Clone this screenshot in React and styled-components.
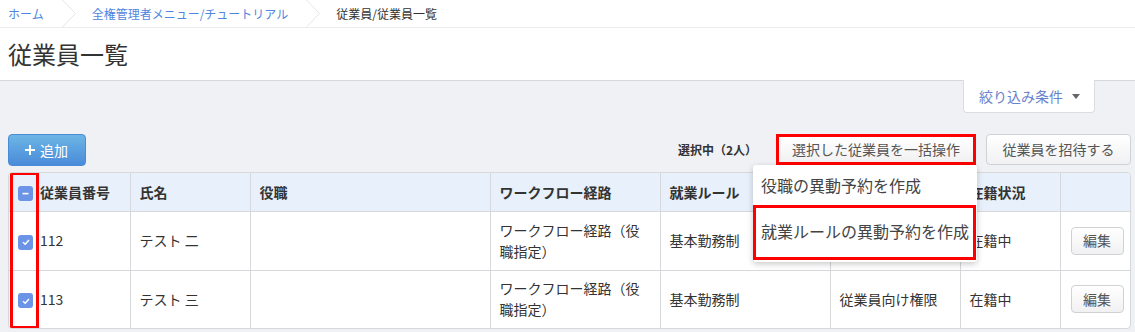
import React from "react";
import styled, { createGlobalStyle } from "styled-components";

const Global = createGlobalStyle`
  html, body { margin: 0; padding: 0; background: #f0f1f5; }
  body { font-family: "Noto Sans CJK JP", "Noto Sans", sans-serif; color: #333; }
  * { box-sizing: border-box; }
`;

const Page = styled.div`
  width: 1135px;
  height: 332px;
  overflow: hidden;
  background: #f0f1f5;
`;

const Breadcrumb = styled.nav`
  display: flex;
  align-items: center;
  height: 28px;
  padding-left: 8px;
  background: #fff;
  border-bottom: 1px solid #ececec;
  font-size: 12px;
`;

const Crumb = styled.span`
  color: ${(p) => (p.$current ? "#333" : "#4f86e0")};
  white-space: nowrap;
  line-height: 27px;
`;

const SepWrap = styled.span`
  display: flex;
  width: 14px;
  height: 27px;
  margin: 0 16px 0 18px;
`;

const Sep = () => (
  <SepWrap>
    <svg width="14" height="27" viewBox="0 0 14 27">
      <polyline points="0.5,0 13.5,13.5 0.5,27" fill="none" stroke="#e6e6e6" strokeWidth="1" />
    </svg>
  </SepWrap>
);

const TitleBar = styled.header`
  height: 53px;
  display: flex;
  align-items: center;
  padding: 0 0 2px 8px;
  background: #fff;
  border-bottom: 1px solid #d6d8dc;
`;

const Title = styled.h1`
  margin: 0;
  font-size: 24px;
  font-weight: 400;
  color: #333;
`;

const Content = styled.main`
  padding: 0 4px 0 8px;
`;

const FilterRow = styled.div`
  display: flex;
  justify-content: flex-end;
  padding-right: 36px;
`;

const FilterTab = styled.button`
  display: flex;
  align-items: center;
  gap: 9px;
  height: 33px;
  width: 132px;
  padding: 0 0 0 15px;
  margin-top: -1px;
  background: #fff;
  border: 1px solid #dcdde1;
  border-top: none;
  border-radius: 0 0 4px 4px;
  font: inherit;
  font-size: 14px;
  color: #6b82cc;
`;

const Caret = styled.span`
  width: 0;
  height: 0;
  border-left: 4px solid transparent;
  border-right: 4px solid transparent;
  border-top: 5px solid #666;
`;

const Toolbar = styled.div`
  display: flex;
  align-items: center;
  height: 32px;
  margin-top: 20px;
`;

const AddButton = styled.button`
  display: flex;
  align-items: center;
  gap: 4px;
  width: 78px;
  height: 32px;
  margin-top: 2px;
  padding: 0 0 0 15px;
  border: 1px solid #4a8ad6;
  border-radius: 4px;
  background: linear-gradient(#6cb6e6, #4a8bd9);
  color: #fff;
  font: inherit;
  font-size: 14px;
`;

const Spacer = styled.div`
  flex: 1;
`;

const SelectedLabel = styled.span`
  font-size: 12px;
  font-weight: 700;
  color: #333;
  margin-right: 19px;
`;

const BulkWrap = styled.div`
  position: relative;
  display: flex;
`;

const GrayButton = styled.button`
  height: 31px;
  padding: 0 14px;
  border: 1px solid #d0d2d6;
  border-radius: 4px;
  background: linear-gradient(#ffffff, #f1f1f3);
  color: #555;
  font: inherit;
  font-size: 14px;
  white-space: nowrap;
`;

const BulkButton = styled(GrayButton)`
  width: 200px;
  border: 3px solid #f00;
  border-radius: 0;
  padding: 0;
`;

const InviteButton = styled(GrayButton)`
  width: 145px;
  margin-left: 10px;
  padding: 0;
`;

const Menu = styled.ul`
  position: absolute;
  top: 31px;
  right: -1px;
  width: 224px;
  margin: 0;
  padding: 0 0 2px;
  list-style: none;
  background: #fff;
  border-radius: 3px;
  box-shadow: 0 2px 6px rgba(0, 0, 0, 0.22);
  z-index: 5;
`;

const MenuItem = styled.li`
  display: flex;
  align-items: center;
  height: ${(p) => (p.$hl ? 55 : 40)}px;
  padding: ${(p) => (p.$hl ? "0 0 2px 5px" : "0 0 0 8px")};
  font-size: 16px;
  color: #444;
  white-space: nowrap;
  border: ${(p) => (p.$hl ? "3px solid #f00" : "none")};
  margin-right: ${(p) => (p.$hl ? "1px" : "0")};
`;

const TableWrap = styled.div`
  position: relative;
  margin-top: 7px;
  background: #fff;
  border: 1px solid #d6d8dc;
  border-radius: 4px;
  overflow: hidden;
`;

const Table = styled.table`
  width: 100%;
  border-collapse: collapse;
  table-layout: fixed;
  font-size: 14px;
`;

const Th = styled.th`
  height: 38px;
  padding: 0 0 0 ${(p) => p.$pl ?? 9}px;
  text-align: left;
  font-weight: 700;
  background: #e8f0fb;
  color: #333;
  border-left: ${(p) => (p.$noLeft ? "none" : "1px solid #d6d8dc")};
  border-bottom: 1px solid #d6d8dc;
  white-space: nowrap;
`;

const Td = styled.td`
  height: ${(p) => (p.$last ? 58 : 59)}px;
  padding: 0 ${(p) => p.$pr ?? 6}px 0 ${(p) => p.$pl ?? 9}px;
  vertical-align: middle;
  color: #333;
  line-height: 21px;
  border-left: ${(p) => (p.$noLeft ? "none" : "1px solid #d6d8dc")};
  border-bottom: ${(p) => (p.$last ? "none" : "1px solid #d6d8dc")};
`;

const Box = styled.span`
  display: inline-flex;
  align-items: center;
  justify-content: center;
  width: 15px;
  height: 15px;
  border-radius: 3px;
  background: #6b93e6;
  vertical-align: middle;
`;

const Minus = () => (
  <Box>
    <svg width="9" height="9" viewBox="0 0 9 9">
      <rect x="1.5" y="3.8" width="6" height="1.6" fill="#fff" />
    </svg>
  </Box>
);

const Check = () => (
  <Box>
    <svg width="10" height="10" viewBox="0 0 10 10">
      <polyline points="2,5.2 4.2,7.2 8,3" fill="none" stroke="#fff" strokeWidth="1.5" />
    </svg>
  </Box>
);

const ColHighlight = styled.div`
  position: absolute;
  left: 1px;
  top: -1px;
  width: 29px;
  height: 157px;
  border: 3px solid #f00;
  pointer-events: none;
`;

const EditButton = styled(GrayButton)`
  width: 53px;
  height: 28px;
  padding: 0;
  margin-left: 1px;
`;

/* The 権限 header and first row's 権限 cell sit under the open menu in the reference. */
const rows = [
  { no: "112", name: "テスト 二", role: "", wf: "ワークフロー経路（役職指定）", rule: "基本勤務制", perm: "", status: "在籍中" },
  { no: "113", name: "テスト 三", role: "", wf: "ワークフロー経路（役職指定）", rule: "基本勤務制", perm: "従業員向け権限", status: "在籍中" },
];

const cols = [30, 91, 120, 240, 170, 170, 130, 100, 72];

export default function App() {
  return (
    <Page>
      <Global />
      <Breadcrumb>
        <Crumb>ホーム</Crumb>
        <Sep />
        <Crumb>全権管理者メニュー/チュートリアル</Crumb>
        <Sep />
        <Crumb $current>従業員/従業員一覧</Crumb>
      </Breadcrumb>
      <TitleBar>
        <Title>従業員一覧</Title>
      </TitleBar>
      <Content>
        <FilterRow>
          <FilterTab>
            絞り込み条件 <Caret />
          </FilterTab>
        </FilterRow>
        <Toolbar>
          <AddButton>
            <svg width="12" height="12" viewBox="0 0 12 12">
              <path d="M6 1v10M1 6h10" stroke="#fff" strokeWidth="2" />
            </svg>
            追加
          </AddButton>
          <Spacer />
          <SelectedLabel>選択中（2人）</SelectedLabel>
          <BulkWrap>
            <BulkButton>選択した従業員を一括操作</BulkButton>
            <Menu>
              <MenuItem>役職の異動予約を作成</MenuItem>
              <MenuItem $hl>就業ルールの異動予約を作成</MenuItem>
            </Menu>
          </BulkWrap>
          <InviteButton>従業員を招待する</InviteButton>
        </Toolbar>
        <TableWrap>
          <Table>
            <colgroup>
              {cols.map((w, i) => (
                <col key={i} style={{ width: w }} />
              ))}
            </colgroup>
            <thead>
              <tr>
                <Th $noLeft $pl={9}>
                  <Minus />
                </Th>
                <Th $noLeft $pl={1}>従業員番号</Th>
                <Th>氏名</Th>
                <Th>役職</Th>
                <Th>ワークフロー経路</Th>
                <Th>就業ルール</Th>
                <Th></Th>
                <Th>在籍状況</Th>
                <Th></Th>
              </tr>
            </thead>
            <tbody>
              {rows.map((r, i) => {
                const last = i === rows.length - 1;
                return (
                  <tr key={r.no}>
                    <Td $noLeft $last={last} $pl={9}>
                      <Check />
                    </Td>
                    <Td $noLeft $last={last} $pl={1}>{r.no}</Td>
                    <Td $last={last}>{r.name}</Td>
                    <Td $last={last}>{r.role}</Td>
                    <Td $last={last} $pr={14}>{r.wf}</Td>
                    <Td $last={last}>{r.rule}</Td>
                    <Td $last={last}>{r.perm}</Td>
                    <Td $last={last}>{r.status}</Td>
                    <Td $last={last}>
                      <EditButton>編集</EditButton>
                    </Td>
                  </tr>
                );
              })}
            </tbody>
          </Table>
          <ColHighlight />
        </TableWrap>
      </Content>
    </Page>
  );
}
